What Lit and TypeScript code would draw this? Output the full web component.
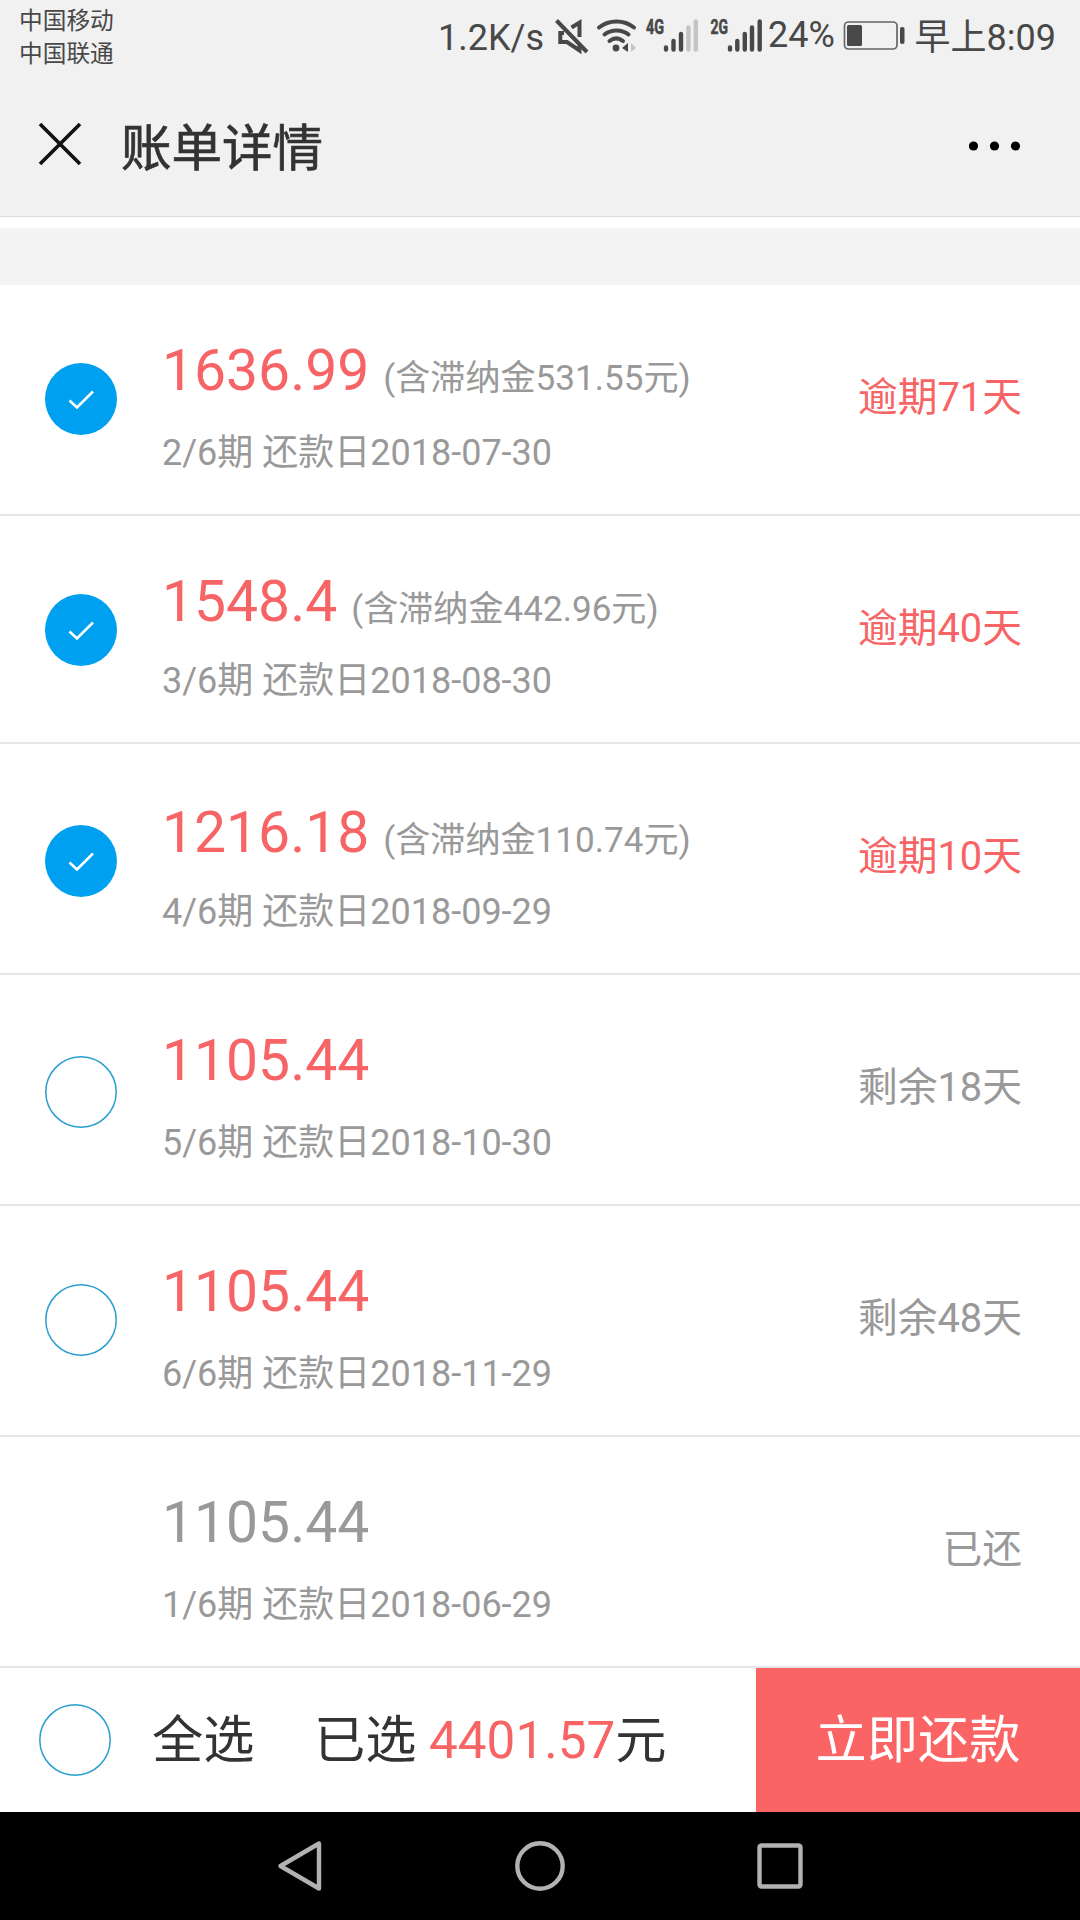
import { LitElement, html, css, nothing } from "lit";
import { customElement } from "lit/decorators.js";
import { classMap } from "lit/directives/class-map.js";

interface Bill {
  amount: string;
  fee?: string;
  period: string;
  date: string;
  status: string;
  state: "overdue" | "pending" | "paid";
}

const BILLS: Bill[] = [
  { amount: "1636.99", fee: "531.55", period: "2/6", date: "2018-07-30", status: "逾期71天", state: "overdue" },
  { amount: "1548.4", fee: "442.96", period: "3/6", date: "2018-08-30", status: "逾期40天", state: "overdue" },
  { amount: "1216.18", fee: "110.74", period: "4/6", date: "2018-09-29", status: "逾期10天", state: "overdue" },
  { amount: "1105.44", period: "5/6", date: "2018-10-30", status: "剩余18天", state: "pending" },
  { amount: "1105.44", period: "6/6", date: "2018-11-29", status: "剩余48天", state: "pending" },
  { amount: "1105.44", period: "1/6", date: "2018-06-29", status: "已还", state: "paid" },
];

@customElement("app-root")
export class AppRoot extends LitElement {
  static styles = css`
    :host {
      display: flex;
      flex-direction: column;
      width: 1080px;
      height: 1920px;
      overflow: hidden;
      background: #fff;
      font-family: Roboto, "Noto Sans CJK SC", sans-serif;
      color: #333;
      white-space: nowrap;
    }
    * { box-sizing: border-box; }
    svg { display: block; flex: none; }
    .status {
      display: flex;
      align-items: flex-start;
      height: 72px;
      padding: 0 24px 0 19px;
      background: #f1f1f1;
      color: #484848;
      font-size: 36px;
      line-height: 40px;
      flex: none;
    }
    .carriers { font-size: 23.7px; line-height: 33px; padding-top: 5px; width: 419px; }
    .speed { padding-top: 18px; width: 114px; }
    .icons { width: 216px; height: 72px; }
    .pct { padding-top: 15px; width: 74px; }
    .clock { margin-left: auto; padding-top: 18px; }
    .header {
      display: flex;
      align-items: center;
      height: 145px;
      padding: 0 57px 0 38px;
      background: #f1f1f1;
      border-bottom: 1px solid #dcdcdc;
      flex: none;
    }
    .title { margin: 0 auto 0 39px; padding-top: 9px; font-size: 50.5px; font-weight: 400; line-height: 60px; -webkit-text-stroke: 0.7px #333; }
    .more { margin-top: 3px; }
    .gap { height: 68px; border-top: 11px solid #fff; background: #f4f4f4; flex: none; }
    .list { display: grid; grid-template-rows: 231px 228px 231px 231px 231px 231px; flex: none; }
    .row {
      display: flex;
      align-items: flex-start;
      border-bottom: 2px solid #e6e6e6;
      padding: 0 58px 0 45px;
    }
    .check { width: 72px; height: 72px; margin: 78px 45px 0 0; }
    .body { display: flex; flex-direction: column; gap: 23px; padding-top: 52px; }
    .row:nth-child(3) .check, .row:nth-child(4) .check { margin-top: 81px; }
    .row:nth-child(3) .body { padding-top: 55px; }
    .row:nth-child(2) .body, .row:nth-child(3) .body { gap: 20px; }
    .line { display: flex; align-items: baseline; height: 68px; line-height: 68px; }
    .amount { font-size: 57px; color: #f76466; }
    .fee { font-size: 35.1px; line-height: 40px; color: #999; margin-left: 14px; }
    .sub { font-size: 36px; line-height: 50px; color: #999; }
    .due { margin: 88px 0 0 auto; font-size: 39.8px; line-height: 50px; color: #f76466; }
    .due.muted, .amount.muted { color: #999; }
    .footer { display: flex; align-items: stretch; height: 144px; font-size: 51.2px; line-height: 60px; flex: none; }
    .all { display: flex; align-items: center; width: 756px; padding-left: 39px; }
    .all span, .pay span { padding-top: 1px; }
    .label { margin-left: 41px; width: 162px; }
    .sum { color: #f76466; }
    .pay {
      display: flex;
      align-items: center;
      justify-content: center;
      width: 324px;
      background: #fb6464;
      color: #fff;
    }
    .nav { display: flex; justify-content: center; flex: 1; background: #000; }
  `;

  private renderCheck(on: boolean) {
    return on
      ? html`<svg class="check" viewBox="0 0 72 72">
          <circle cx="36" cy="36" r="36" fill="#00a0f0" />
          <path d="M24.5 37.5L32 44.5L48 28.5" fill="none" stroke="#fff" stroke-width="2.6" />
        </svg>`
      : html`<svg class="check" viewBox="0 0 72 72">
          <circle cx="36" cy="36" r="35.2" fill="#fff" stroke="#2a9fd0" stroke-width="1.5" />
        </svg>`;
  }

  private renderBill(b: Bill) {
    return html`<div class="row">
      ${b.state === "paid" ? html`<div class="check"></div>` : this.renderCheck(b.state === "overdue")}
      <div class="body">
        <div class="line">
          <span class=${classMap({ amount: true, muted: b.state === "paid" })}>${b.amount}</span>
          ${b.fee ? html`<span class="fee">(含滞纳金${b.fee}元)</span>` : nothing}
        </div>
        <div class="sub">${b.period}期 还款日${b.date}</div>
      </div>
      <div class=${classMap({ due: true, muted: b.state !== "overdue" })}>${b.status}</div>
    </div>`;
  }

  render() {
    return html`
      <div class="status">
        <div class="carriers"><div>中国移动</div><div>中国联通</div></div>
        <div class="speed">1.2K/s</div>
        <svg class="icons" viewBox="552 0 216 72">
          <g fill="none" stroke="#484848" stroke-width="4">
            <path d="M556.5 20.5L587 52" />
            <path d="M571.5 27.5L579.5 22.5V37" />
            <path d="M564 33H560.3V42H567L579.5 50.5V45" />
            <path d="M599 27.5C609 19.5 624 19.5 634 27.5" stroke-linecap="round" />
            <path d="M604.5 34.5C611 29 622 29 628.5 34.5" stroke-linecap="round" />
            <path d="M609.5 41C614 37.5 618.5 37.5 623 41" stroke-linecap="round" />
          </g>
          <circle cx="616" cy="48" r="3.4" fill="#484848" />
          <path d="M628 43V52L622 48Z" fill="#484848" />
          <path d="M631 43V52L636 48Z" fill="#c4c4c4" />
          <g font-family="Roboto" font-size="21" font-weight="700" fill="#484848" stroke="#484848" stroke-width="0.6">
            <text x="646" y="34" textLength="18" lengthAdjust="spacingAndGlyphs">4G</text>
            <text x="710.5" y="34" textLength="17.5" lengthAdjust="spacingAndGlyphs">2G</text>
          </g>
          <g stroke="#484848" stroke-width="4.4" stroke-linecap="round">
            <path d="M666 47.5V49.5M673.5 41V49.5M681 34V49.5" />
            <path d="M730 47.5V49.5M737.3 41V49.5M744.8 34V49.5M752 27.5V49.5M759.7 21.5V49.5" />
            <path d="M688.4 27.5V49.5M695.8 21.5V49.5" stroke="#c4c4c4" />
          </g>
        </svg>
        <div class="pct">24%</div>
        <svg width="64" height="72" viewBox="842 0 64 72">
          <rect x="844.5" y="22" width="52.5" height="27" rx="4" fill="none" stroke="#666" stroke-width="1.7" />
          <rect x="847" y="25" width="15" height="21" rx="1.5" fill="#484848" />
          <rect x="900" y="27" width="4.5" height="17" rx="2" fill="#484848" />
        </svg>
        <div class="clock">早上8:09</div>
      </div>
      <div class="header">
        <svg width="44" height="44" viewBox="0 0 44 44">
          <path d="M2 2L42 42M42 2L2 42" stroke="#111" stroke-width="3.6" />
        </svg>
        <h1 class="title">账单详情</h1>
        <svg class="more" width="54" height="10" viewBox="0 0 54 10">
          <circle cx="4.5" cy="5" r="4.6" /><circle cx="25.5" cy="5" r="4.6" /><circle cx="46.5" cy="5" r="4.6" />
        </svg>
      </div>
      <div class="gap"></div>
      <div class="list">${BILLS.map((b) => this.renderBill(b))}</div>
      <div class="footer">
        <div class="all">
          <svg width="72" height="72" viewBox="0 0 72 72">
            <circle cx="36" cy="36" r="35.2" fill="#fff" stroke="#2a9fd0" stroke-width="1.5" />
          </svg>
          <span class="label">全选</span>
          <span>已选 <span class="sum">4401.57</span>元</span>
        </div>
        <div class="pay"><span>立即还款</span></div>
      </div>
      <div class="nav">
        <svg width="1080" height="108" viewBox="0 1812 1080 108" fill="none" stroke="#b2b2b2" stroke-width="4.4" stroke-linejoin="round">
          <path d="M319 1843.5V1888.5L280.5 1866Z" />
          <circle cx="540" cy="1866" r="22.7" />
          <rect x="759.5" y="1845.5" width="41" height="41" rx="2" />
        </svg>
      </div>
    `;
  }
}
